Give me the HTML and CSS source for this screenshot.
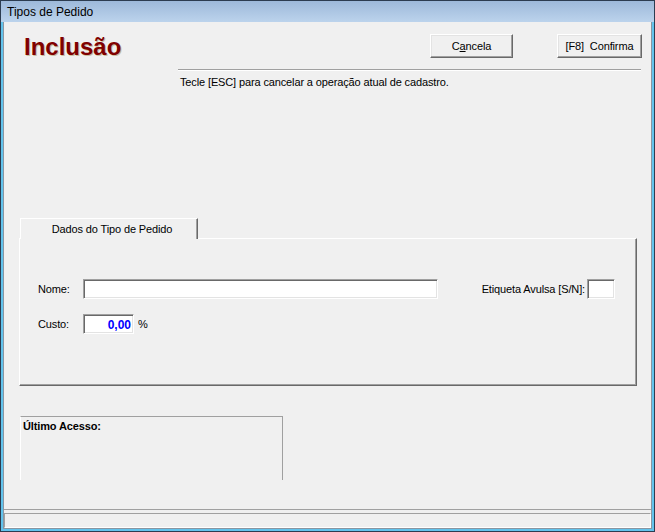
FILE: index.html
```html
<!DOCTYPE html>
<html lang="pt">
<head>
    <meta charset="UTF-8">
    <title>Tipos de Pedido</title>
    <link rel="stylesheet" href="styles.css">
</head>
<body>
    <div class="window">
        <div class="titlebar">Tipos de Pedido</div>
        <div class="client">
            <div class="top">
                <h1 class="mode">Inclusão</h1>
                <div class="actions">
                    <button class="btn btn-cancel">C<u>a</u>ncela</button>
                    <button class="btn btn-ok">[F8]&nbsp;&nbsp;Confirma</button>
                </div>
            </div>
            <div class="hint">
                <div class="rule"></div>
                <p>Tecle [ESC] para cancelar a operação atual de cadastro.</p>
            </div>
            <div class="tabs">
                <div class="tab-strip">
                    <div class="tab">Dados do Tipo de Pedido</div>
                </div>
                <div class="tab-panel">
                    <div class="row">
                        <label class="lbl">Nome:</label>
                        <div class="field field-name"></div>
                        <label class="lbl lbl-tag">Etiqueta Avulsa [S/N]:</label>
                        <div class="field field-tag"></div>
                    </div>
                    <div class="row row-cost">
                        <label class="lbl">Custo:</label>
                        <div class="field field-cost">0,00</div>
                        <span class="pct">%</span>
                    </div>
                </div>
            </div>
            <div class="last-access">Último Acesso:</div>
            <div class="status">
                <div class="status-panel"></div>
            </div>
        </div>
    </div>
</body>
</html>
```

FILE: styles.css
```css
* { box-sizing: border-box; }
body { margin: 0; font-family: "Liberation Sans", Arial, sans-serif; font-size: 11px; letter-spacing: -0.13px; color: #000; }
.window { width: 655px; height: 532px; border: 1px solid #2c3c50; padding: 0 2px 2px 2px; background: #62c3ec; display: flex; flex-direction: column; }
.titlebar { height: 21px; margin: 0 -2px; padding: 4px 0 0 6px; font-size: 12px; line-height: 14px; letter-spacing: 0; background: linear-gradient(#9db9da, #bcd3ec); }
.client { flex: 1; background: #f0f0f0; border: 1px solid #8a96a2; border-top: none; display: flex; flex-direction: column; }

.top { display: flex; align-items: flex-start; padding: 12px 9px 0 20px; }
.mode { margin: 1px 0 0 0; font-size: 24px; line-height: 24px; font-weight: bold; letter-spacing: 0; color: #800000; text-shadow: 1px 1px 0 #c9bfa0; }
.actions { margin-left: auto; display: flex; gap: 44px; }
.btn { height: 24px; padding: 0; background: #f0f0f0; font-family: inherit; font-size: 11px; letter-spacing: inherit; color: #000; border: 1px solid; border-color: #fff #696969 #696969 #fff; box-shadow: inset -1px -1px 0 #a0a0a0, inset 1px 1px 0 #e3e3e3; }
.btn-cancel { width: 83px; }
.btn-ok { width: 85px; }

.hint { height: 159px; padding-top: 10px; }
.rule { margin: 0 10px 0 174px; border-top: 1px solid #a0a0a0; border-bottom: 1px solid #fff; }
.hint p { margin: 5px 0 0 176px; line-height: 13px; }

.tabs { margin: 0 14px 0 15px; }
.tab-strip { display: flex; align-items: flex-start; height: 20px; padding-left: 1px; }
.tab { width: 178px; height: 21px; padding: 4px 0 0 6px; text-align: center; line-height: 13px; border: 1px solid; border-bottom: none; border-color: #fff #696969 #fff #fff; box-shadow: inset -1px 0 0 #a0a0a0; position: relative; z-index: 1; background: #f0f0f0; }
.tab-panel { height: 148px; border: 1px solid; border-color: #fff #696969 #696969 #fff; box-shadow: inset -1px -1px 0 #a0a0a0; padding: 40px 21px 0 18px; }
.row { display: flex; align-items: center; }
.row-cost { margin-top: 15px; }
.lbl { width: 45px; }
.field { height: 20px; background: #fff; border: 1px solid; border-color: #a0a0a0 #fff #fff #a0a0a0; box-shadow: inset 1px 1px 0 #696969, inset -1px -1px 0 #e3e3e3; }
.field-name { width: 355px; }
.lbl-tag { width: auto; margin-left: auto; margin-right: 2px; }
.field-tag { width: 28px; }
.field-cost { width: 51px; padding: 3px 2px 0 0; text-align: right; color: #0000ff; font-weight: bold; font-size: 12px; line-height: 14px; letter-spacing: 0; }
.pct { margin-left: 4px; }

.last-access { margin: 30px 0 0 16px; width: 263px; height: 64px; padding: 3px 0 0 2px; font-weight: bold; line-height: 13px; border-top: 1px solid #a0a0a0; border-right: 1px solid #a0a0a0; border-left: 1px solid #fff; }

.status { margin-top: auto; border-top: 1px solid #a0a0a0; padding-top: 3px; }
.status-panel { height: 15px; border: 1px solid; border-color: #a0a0a0 #fff #fff #a0a0a0; }
```
